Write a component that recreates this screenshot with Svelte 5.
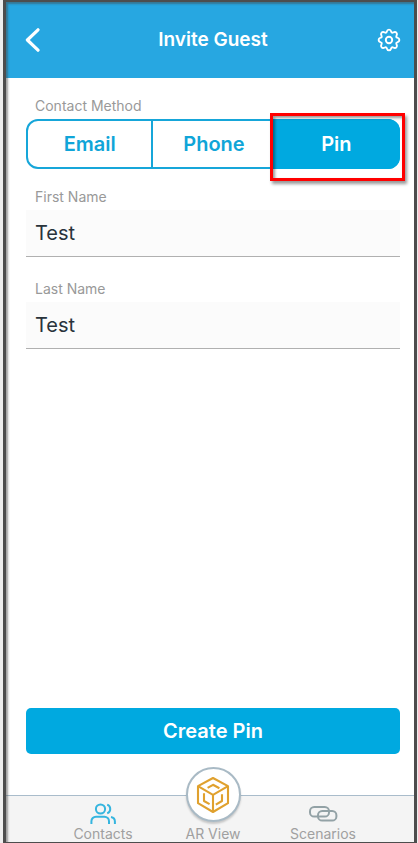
<script>
  let methods = ["Email", "Phone", "Pin"];
  let method = "Pin";
  let firstName = "Test";
  let lastName = "Test";

  function createPin(event) {
    event.preventDefault();
  }
</script>

<div class="frame">
  <header class="topbar">
    <button type="button" class="icon-btn" aria-label="Back">
      <svg width="16" height="24" viewBox="0 0 16 24" fill="none" stroke="currentColor" stroke-width="3.2" stroke-linecap="round" stroke-linejoin="round">
        <path d="M13 1.8 2.4 12 13 22.2" />
      </svg>
    </button>
    <h1>Invite Guest</h1>
    <button type="button" class="icon-btn right" aria-label="Settings">
      <svg width="24" height="24" viewBox="0 0 24 24" fill="none" stroke="currentColor" stroke-width="1.9" stroke-linejoin="round">
        <path d="M9.7 3.7Q10.3 1.6 12 1.6T14.3 3.7Q14.7 5.2 16.2 4.5Q18.2 3.4 19.4 4.6T19.5 7.8Q18.8 9.3 20.3 9.7Q22.4 10.3 22.4 12T20.3 14.3Q18.8 14.7 19.5 16.2Q20.6 18.2 19.4 19.4T16.2 19.5Q14.7 18.8 14.3 20.3Q13.7 22.4 12 22.4T9.7 20.3Q9.3 18.8 7.8 19.5Q5.8 20.6 4.6 19.4T4.5 16.2Q5.2 14.7 3.7 14.3Q1.6 13.7 1.6 12T3.7 9.7Q5.2 9.3 4.5 7.8Q3.4 5.8 4.6 4.6T7.8 4.5Q9.3 5.2 9.7 3.7Z" />
        <circle cx="12" cy="12" r="3.2" />
      </svg>
    </button>
  </header>

  <form class="content" on:submit={createPin}>
    <span class="label" id="method-label">Contact Method</span>
    <div class="segments" role="group" aria-labelledby="method-label">
      {#each methods as name (name)}
        <button
          type="button"
          class:active={method === name}
          class:marked={name === "Pin"}
          aria-pressed={method === name}
          on:click={() => (method = name)}
        >
          {name}
        </button>
      {/each}
    </div>

    <div class="field">
      <label class="label" for="first-name">First Name</label>
      <input id="first-name" type="text" bind:value={firstName} />
    </div>
    <div class="field">
      <label class="label" for="last-name">Last Name</label>
      <input id="last-name" type="text" bind:value={lastName} />
    </div>

    <button type="submit" class="create">Create Pin</button>
  </form>

  <nav class="tabs">
    <a href="#contacts">
      <svg class="contacts" width="28" height="24" viewBox="0 0 28 24" fill="none" stroke="currentColor" stroke-width="2">
        <circle cx="11.5" cy="7" r="4.6" />
        <path d="M2.4 22v-2.7a4.6 4.6 0 0 1 4.6-4.6h8.4a4.6 4.6 0 0 1 4.6 4.6V22" />
        <path d="M18.2 2.6a4.7 4.7 0 0 1 0 8.8" />
        <path d="M22 14.9a4.6 4.6 0 0 1 3.9 4.6V22" />
      </svg>
      Contacts
    </a>
    <a href="#ar-view">
      <span class="ar-circle">
        <svg width="36" height="38" viewBox="0 0 36 38" fill="none" stroke="currentColor" stroke-width="2.1" stroke-linejoin="round">
          <path d="M18 2 33 10.2V27.2L18 36 3 27.2V10.2Z" />
          <path d="M3 10.2 18 18.8 33 10.2M18 18.8V36" />
          <path d="M12.6 11.8 18 8.8 24.4 12.2" />
          <path d="M9 17.2V25L14.6 28.2" />
          <path d="M27 18.2V25L20.8 28.6" />
        </svg>
      </span>
      AR View
    </a>
    <a href="#scenarios">
      <svg class="scenarios" width="30" height="24" viewBox="0 0 30 24" fill="none" stroke="currentColor" stroke-width="2">
        <rect x="2" y="5" width="19" height="9.6" rx="4.2" />
        <rect x="10" y="9" width="18.4" height="9.6" rx="4.2" />
      </svg>
      Scenarios
    </a>
  </nav>
</div>

<style>
  :global(body) {
    margin: 0;
    background: #eeeeee;
  }

  * {
    box-sizing: border-box;
  }

  .frame {
    position: relative;
    display: flex;
    flex-direction: column;
    min-height: 100vh;
    margin: 0 1px 0 3px;
    border: 3px solid #4d4d4d;
    border-top-width: 2px;
    border-bottom-width: 1px;
    background: #ffffff;
    font-family: Inter, "Liberation Sans", sans-serif;
  }
  /* inner shadow of the screen edge */
  .frame::after {
    content: "";
    position: absolute;
    inset: 0;
    box-shadow: inset 2px 2px 2px rgba(70, 70, 70, 0.5);
    pointer-events: none;
  }

  button,
  input {
    font-family: inherit;
  }

  /* top bar */
  .topbar {
    display: grid;
    grid-template-columns: 32px 1fr 32px;
    align-items: center;
    height: 76px;
    padding: 0 13px 0 19px;
    background: #27a7e1;
    color: #ffffff;
  }
  .topbar h1 {
    margin: 0;
    font-size: 19px;
    font-weight: 600;
    line-height: 24px;
    text-align: center;
  }
  .icon-btn {
    display: flex;
    padding: 0;
    border: none;
    background: none;
    color: inherit;
    cursor: pointer;
  }
  .icon-btn.right {
    justify-content: flex-end;
  }

  /* form */
  .content {
    flex: 1;
    display: flex;
    flex-direction: column;
    padding: 18px 14px 41px 20px;
  }
  .label {
    display: block;
    margin-bottom: 3px;
    padding-left: 9px;
    font-size: 14px;
    line-height: 20px;
    color: #999999;
  }
  .segments {
    display: grid;
    grid-template-columns: repeat(3, 1fr);
    height: 50px;
    margin-bottom: 18px;
    border: 2px solid #16a6d9;
    border-radius: 12px;
  }
  .segments button {
    position: relative;
    padding: 0;
    border: none;
    background: none;
    font-size: 20px;
    font-weight: 600;
    color: #10a5d8;
    cursor: pointer;
  }
  .segments button + button {
    border-left: 2px solid #16a6d9;
  }
  .segments button.active {
    margin: -2px;
    border: none;
    background: #00a9e0;
    color: #ffffff;
  }
  .segments button:first-child {
    border-radius: 12px 0 0 12px;
  }
  .segments button:last-child {
    border-radius: 0 12px 12px 0;
  }
  /* red callout around the last segment */
  .marked::after {
    content: "";
    position: absolute;
    inset: -6px -5px -12px -3px;
    border: 3px solid #ff0000;
    box-shadow:
      2px 3px 3px rgba(0, 0, 0, 0.4),
      inset 2px 2px 3px rgba(0, 0, 0, 0.4);
    pointer-events: none;
  }

  .field {
    margin-bottom: 22px;
  }
  .field input {
    display: block;
    width: 100%;
    height: 47px;
    padding: 0 9px;
    border: none;
    border-bottom: 1px solid #b0b0b0;
    border-radius: 0;
    outline: none;
    background: #fbfbfb;
    font-size: 20px;
    color: #29333b;
  }

  .create {
    height: 46px;
    margin-top: auto;
    border: none;
    border-radius: 5px;
    background: #00a9e0;
    font-size: 20px;
    font-weight: 600;
    color: #ffffff;
    cursor: pointer;
  }

  /* bottom tabs */
  .tabs {
    display: grid;
    grid-template-columns: repeat(3, 1fr);
    grid-template-rows: minmax(0, 1fr);
    height: 47px;
    padding: 0 36px 0 42px;
    border-top: 1px solid #a9bccb;
    background: #f4f4f4;
  }
  .tabs a {
    display: flex;
    flex-direction: column;
    align-items: center;
    justify-content: flex-end;
    font-size: 14px;
    line-height: 16px;
    text-decoration: none;
    color: #a0a0a0;
  }
  .tabs svg {
    flex: none;
  }
  .contacts {
    color: #35b5df;
  }
  .scenarios {
    color: #93a2a6;
  }
  .ar-circle {
    display: flex;
    flex: none;
    align-items: center;
    justify-content: center;
    width: 55px;
    height: 55px;
    margin-bottom: 4px;
    border: 2px solid #a9bac5;
    border-radius: 50%;
    background: #ffffff;
    box-shadow: 0 2px 2px rgba(0, 0, 0, 0.18);
    color: #e0a12e;
  }
</style>
